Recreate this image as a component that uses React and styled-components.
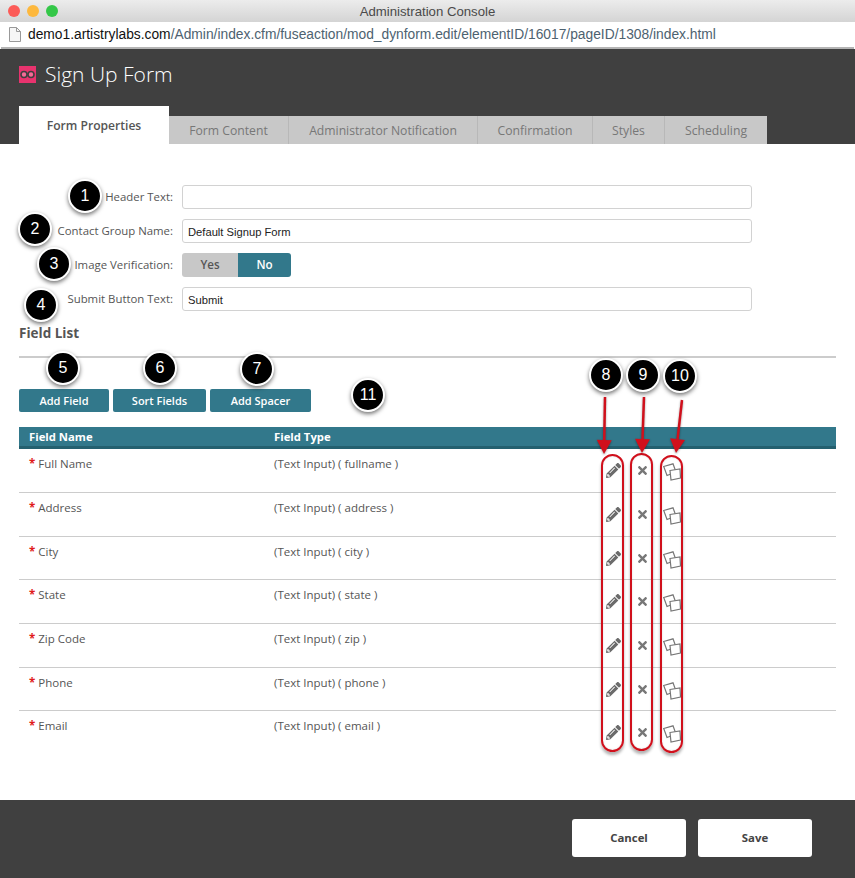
import React from 'react'
import styled, { createGlobalStyle } from 'styled-components'
import { FaPencilAlt, FaTimes } from 'react-icons/fa'

const TEAL = '#32788b'
const OPEN = '"Open Sans", "Liberation Sans", sans-serif'

const tabs = [
  ['Form Content', 120],
  ['Administrator Notification', 189],
  ['Confirmation', 115],
  ['Styles', 72],
  ['Scheduling', 102]
]

const fields = [
  ['Full Name', 'fullname'],
  ['Address', 'address'],
  ['City', 'city'],
  ['State', 'state'],
  ['Zip Code', 'zip'],
  ['Phone', 'phone'],
  ['Email', 'email']
]

const badges = [
  ['1', 85, 196], ['2', 35, 229], ['3', 54, 264], ['4', 41, 305],
  ['5', 63, 368], ['6', 160, 368], ['7', 257, 369], ['8', 606, 375],
  ['9', 643, 375], ['10', 680, 376], ['11', 368, 395]
]

const GlobalStyle = createGlobalStyle`
  html, body {
    margin: 0;
    padding: 0;
    background: #fff;
  }
  * {
    box-sizing: border-box;
  }
`

const Page = styled.div`
  position: relative;
  width: 855px;
  height: 878px;
  display: flex;
  flex-direction: column;
  overflow: hidden;
  font-family: ${OPEN};
  color: #555;
`

const TitleBar = styled.div`
  height: 22px;
  flex: none;
  display: flex;
  align-items: center;
  justify-content: center;
  position: relative;
  background: linear-gradient(#ececec, #d4d4d4);
  font: 13.2px "Liberation Sans", sans-serif;
  color: #4a4a4a;
`

const Lights = styled.div`
  position: absolute;
  left: 8px;
  top: 5px;
  display: flex;
  gap: 7px;
`

const Light = styled.span`
  width: 12px;
  height: 12px;
  border-radius: 50%;
  background: ${p => p.$color};
`

const UrlBar = styled.div`
  height: 27px;
  flex: none;
  display: flex;
  align-items: center;
  gap: 7px;
  padding: 0 8px;
  margin: 0 1px;
  background: #fff;
  border-bottom: 2px solid #b4b4b4;
  font: 13.8px "Liberation Sans", sans-serif;
  color: #4d6270;
  white-space: nowrap;
`

const Host = styled.span`
  color: #111;
`

const Header = styled.header`
  height: 95px;
  flex: none;
  display: flex;
  flex-direction: column;
  justify-content: space-between;
  background: #404040;
  padding: 0 19px;
`

const Brand = styled.div`
  display: flex;
  align-items: center;
  gap: 9px;
  height: 50px;
  color: #fff;
  font-size: 21px;
  font-weight: 300;
`

const Tabs = styled.nav`
  display: flex;
  align-items: flex-end;
`

const ActiveTab = styled.div`
  width: 150px;
  height: 38px;
  display: flex;
  align-items: center;
  justify-content: center;
  background: #fff;
  font-size: 12.1px;
  font-weight: 600;
  color: #555;
`

const Tab = styled.div`
  width: ${p => p.$w}px;
  height: 28px;
  display: flex;
  align-items: center;
  justify-content: center;
  background: #c8c8c8;
  border-right: 1px solid #b8b8b8;
  font-size: 12.2px;
  font-weight: 500;
  color: #777;
  &:last-child {
    border-right: 0;
  }
`

const Main = styled.main`
  flex: 1;
  padding: 41px 19px 0;
`

const FormGrid = styled.div`
  display: grid;
  grid-template-columns: 154px 570px;
  column-gap: 9px;
  row-gap: 10px;
  align-items: center;
`

const Label = styled.label`
  padding-bottom: 2px;
  text-align: right;
  font-size: 11.4px;
  color: #555;
`

const TextInput = styled.div`
  height: 24px;
  display: flex;
  align-items: center;
  padding: 1px 5px 0;
  background: #fff;
  border: 1px solid #d2d2d2;
  border-radius: 3px;
  font: 11.2px "Liberation Sans", sans-serif;
  color: #222;
`

const Toggle = styled.div`
  display: flex;
  width: 109px;
  height: 24px;
  border-radius: 3px;
  overflow: hidden;
  font-size: 11.6px;
  font-weight: 600;
`

const ToggleOption = styled.div`
  flex: ${p => (p.$on ? '53px' : '56px')} 0 0;
  display: flex;
  align-items: center;
  justify-content: center;
  padding-bottom: 2px;
  background: ${p => (p.$on ? TEAL : '#c8c8c8')};
  color: ${p => (p.$on ? '#fff' : '#555')};
`

const SectionTitle = styled.h2`
  margin: 13px 0 13px;
  font-size: 13.5px;
  line-height: 19px;
  font-weight: 700;
  color: #555;
`

const Rule = styled.div`
  height: 2px;
  background: #ccc;
  margin-bottom: 31px;
`

const Toolbar = styled.div`
  display: flex;
  gap: 4px;
  margin-bottom: 15px;
`

const ActionButton = styled.div`
  width: ${p => p.$w}px;
  height: 23px;
  display: flex;
  align-items: center;
  justify-content: center;
  background: ${TEAL};
  border-radius: 2px;
  color: #fff;
  font-size: 11px;
  font-weight: 600;
`

const Row = styled.div`
  display: grid;
  grid-template-columns: 245px 325px 29px 29px 30px 1fr;
  padding-left: 10px;
`

const TableHead = styled(Row)`
  height: 22.3px;
  padding-bottom: 1px;
  align-items: center;
  background: ${TEAL};
  border-bottom: 3px solid #24606f;
  color: #fff;
  font-size: 11.3px;
  font-weight: 700;
`

const FieldRow = styled(Row)`
  height: 43.7px;
  font-size: 11.5px;
  color: #555;
  border-bottom: 1px solid ${p => (p.$last ? 'transparent' : '#ccc')};
`

const Cell = styled.div`
  padding-top: 7px;
`

const Star = styled.span`
  color: #e01b1b;
  font-weight: 700;
`

const IconCell = styled.div`
  display: flex;
  justify-content: center;
  padding-top: 14px;
  color: #6b6b6b;
  font-size: 15px;
`

const RemoveIcon = styled(FaTimes)`
  font-size: 13px;
  margin-top: 1px;
  color: #777;
`

const Footer = styled.footer`
  height: 78px;
  flex: none;
  display: flex;
  align-items: flex-start;
  justify-content: flex-end;
  gap: 12px;
  padding: 19px 43px 0 0;
  background: #404040;
`

const FooterButton = styled.div`
  width: 114px;
  height: 38px;
  padding-bottom: 1px;
  display: flex;
  align-items: center;
  justify-content: center;
  background: #fff;
  border-radius: 3px;
  color: #444;
  font-size: 11.4px;
  font-weight: 700;
`

const Badge = styled.div`
  position: absolute;
  left: ${p => p.$x - 17}px;
  top: ${p => p.$y - 17}px;
  width: 34px;
  height: 34px;
  display: flex;
  align-items: center;
  justify-content: center;
  background: #000;
  border: 2px solid #fff;
  border-radius: 50%;
  box-shadow: 0 2px 4px rgba(0, 0, 0, 0.55);
  color: #fff;
  font: 16px "Liberation Sans", sans-serif;
`

const Highlight = styled.div`
  position: absolute;
  left: ${p => p.$x}px;
  top: ${p => p.$y}px;
  width: 23px;
  height: 298px;
  border: 2px solid #d0101c;
  border-radius: 12px;
  box-shadow: 0 3px 3px rgba(0, 0, 0, 0.3), inset 0 0 2px rgba(0, 0, 0, 0.15);
`

const ArrowLayer = styled.svg`
  position: absolute;
  left: 0;
  top: 0;
  pointer-events: none;
  filter: drop-shadow(0 1px 1px rgba(0, 0, 0, 0.35));
`

function DocIcon () {
  return (
    <svg width='12' height='15' viewBox='0 0 12 15'>
      <path d='M.5.5h7l4 4v10H.5z' fill='#f6f6f6' stroke='#999' />
      <path d='M7.5.5v4h4' fill='none' stroke='#999' />
    </svg>
  )
}

function Logo () {
  return (
    <svg width='17' height='17' viewBox='0 0 17 17'>
      <rect width='17' height='17' fill='#e8336e' />
      <circle cx='5' cy='8.5' r='3' fill='#f56a97' stroke='#3f3f3f' strokeWidth='1.6' />
      <circle cx='12' cy='8.5' r='3' fill='#f56a97' stroke='#3f3f3f' strokeWidth='1.6' />
    </svg>
  )
}

function CopyIcon () {
  return (
    <svg width='18' height='18' viewBox='0 0 18 18' fill='#fff' stroke='#777' strokeWidth='1.2'>
      <path d='M.7 3.5 10 .8l3 8.2-9 3.5z' />
      <path d='M7 7.5 17 6l.5 9L8 17z' />
    </svg>
  )
}

function Arrow ({ x1, y1, x2, y2 }) {
  const angle = Math.atan2(y2 - y1, x2 - x1)
  const back = 14
  const half = 7.5
  const bx = x2 - back * Math.cos(angle)
  const by = y2 - back * Math.sin(angle)
  const nx = -Math.sin(angle) * half
  const ny = Math.cos(angle) * half
  return (
    <g>
      <line x1={x1} y1={y1} x2={bx} y2={by} stroke='#d0101c' strokeWidth='2.5' />
      <polygon points={`${x2},${y2} ${bx + nx},${by + ny} ${bx - nx},${by - ny}`} fill='#d0101c' />
    </g>
  )
}

export default function App () {
  return (
    <Page>
      <GlobalStyle />
      <TitleBar>
        <Lights>
          <Light $color='#fc5b57' />
          <Light $color='#fdb83d' />
          <Light $color='#34c748' />
        </Lights>
        Administration Console
      </TitleBar>
      <UrlBar>
        <DocIcon />
        <span>
          <Host>demo1.artistrylabs.com</Host>/Admin/index.cfm/fuseaction/mod_dynform.edit/elementID/16017/pageID/1308/index.html
        </span>
      </UrlBar>

      <Header>
        <Brand>
          <Logo />
          Sign Up Form
        </Brand>
        <Tabs>
          <ActiveTab>Form Properties</ActiveTab>
          {tabs.map(([tab, w]) => (
            <Tab key={tab} $w={w}>{tab}</Tab>
          ))}
        </Tabs>
      </Header>

      <Main>
        <FormGrid>
          <Label>Header Text:</Label>
          <TextInput />
          <Label>Contact Group Name:</Label>
          <TextInput>Default Signup Form</TextInput>
          <Label>Image Verification:</Label>
          <Toggle>
            <ToggleOption>Yes</ToggleOption>
            <ToggleOption $on>No</ToggleOption>
          </Toggle>
          <Label>Submit Button Text:</Label>
          <TextInput>Submit</TextInput>
        </FormGrid>

        <SectionTitle>Field List</SectionTitle>
        <Rule />

        <Toolbar>
          <ActionButton $w={90}>Add Field</ActionButton>
          <ActionButton $w={93}>Sort Fields</ActionButton>
          <ActionButton $w={101}>Add Spacer</ActionButton>
        </Toolbar>

        <TableHead>
          <div>Field Name</div>
          <div>Field Type</div>
        </TableHead>
        {fields.map(([name, key], i) => (
          <FieldRow key={key} $last={i === fields.length - 1}>
            <Cell><Star>*</Star> {name}</Cell>
            <Cell>(Text Input) ( {key} )</Cell>
            <IconCell><FaPencilAlt /></IconCell>
            <IconCell><RemoveIcon /></IconCell>
            <IconCell><CopyIcon /></IconCell>
          </FieldRow>
        ))}
      </Main>

      <Footer>
        <FooterButton>Cancel</FooterButton>
        <FooterButton>Save</FooterButton>
      </Footer>

      <Highlight $x={601} $y={454} />
      <Highlight $x={630} $y={453} />
      <Highlight $x={660} $y={455} />
      <ArrowLayer width='855' height='878'>
        <Arrow x1={605} y1={397} x2={604} y2={454} />
        <Arrow x1={644} y1={397} x2={642} y2={453} />
        <Arrow x1={682} y1={400} x2={676} y2={453} />
      </ArrowLayer>
      {badges.map(([n, x, y]) => (
        <Badge key={n} $x={x} $y={y}>{n}</Badge>
      ))}
    </Page>
  )
}
